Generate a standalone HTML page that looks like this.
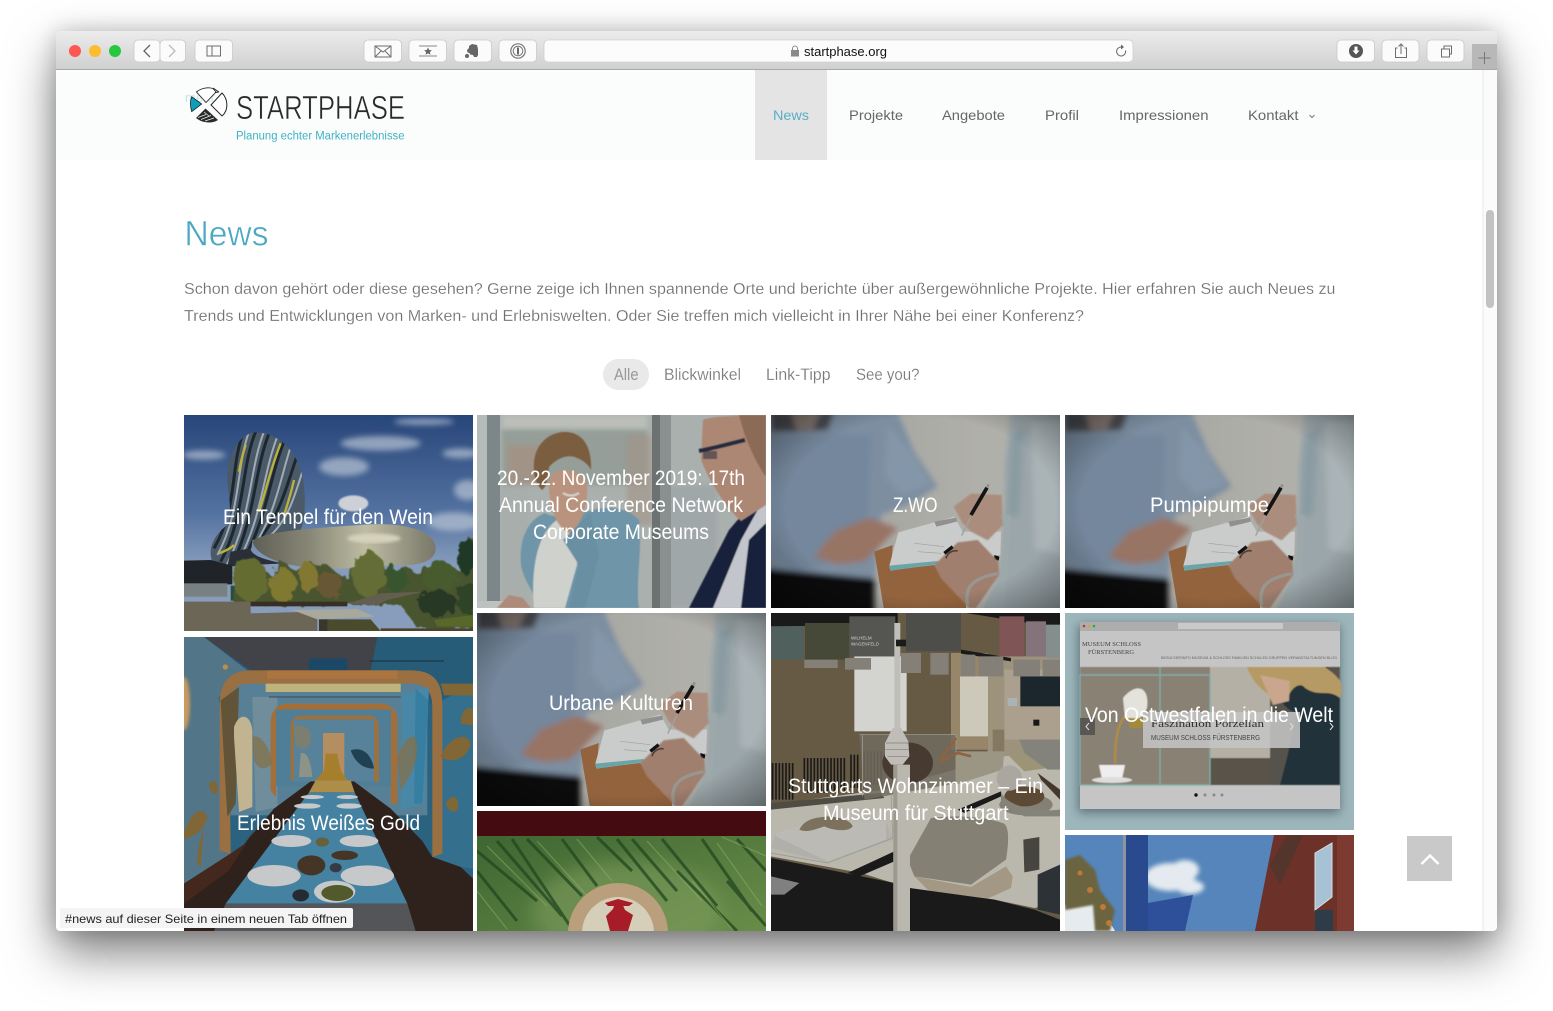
<!DOCTYPE html>
<html lang="de"><head><meta charset="utf-8"><title>Startphase News</title>
<style>
html,body{margin:0;padding:0;background:#fff;width:1553px;height:1011px;overflow:hidden}
#win{position:absolute;left:56px;top:31px;width:1441px;height:900px;border-radius:6px 6px 4px 4px;background:#fff;box-shadow:0 22px 48px rgba(0,0,0,.5),0 0 22px rgba(0,0,0,.18)}
svg#p{position:absolute;left:0;top:0}
text{font-family:"Liberation Sans",sans-serif}
.t{fill:#fff;font-size:21px}
.n{font-size:14px;fill:#666}
.b{font-size:16px;fill:#6f6f6f;stroke:#fff;stroke-width:.18}
.f{font-size:17px;fill:#777;stroke:#fff;stroke-width:.18}
.btn{fill:#fbfbfb;stroke:#c9c9c9;stroke-width:.8}
.i{fill:none;stroke:#6e6e6e;stroke-width:1}
</style></head><body>
<div id="win"></div>
<svg id="p" xmlns="http://www.w3.org/2000/svg" width="1553" height="1011" viewBox="0 0 1553 1011">
<defs>
<clipPath id="wc"><rect x="56" y="31" width="1441" height="900" rx="5"/></clipPath>
<clipPath id="tow"><path d="M130 200C125 110 175 50 220 52 290 55 360 120 362 240 365 300 355 345 345 350L205 375 200 420 130 455 85 440C70 400 90 360 130 330 145 290 135 250 130 200Z"/></clipPath>
<filter id="b05"><feGaussianBlur stdDeviation=".6"/></filter>
<filter id="b1"><feGaussianBlur stdDeviation="1"/></filter>
<filter id="b2"><feGaussianBlur stdDeviation="2.500"/></filter>
<filter id="b5"><feGaussianBlur stdDeviation="5"/></filter>
<filter id="b8"><feGaussianBlur stdDeviation="9"/></filter>
<filter id="rough" x="-5%" y="-5%" width="110%" height="110%"><feTurbulence type="fractalNoise" baseFrequency=".035" numOctaves="3" seed="4" result="n"/><feDisplacementMap in="SourceGraphic" in2="n" scale="32"/><feGaussianBlur stdDeviation="1.200"/></filter>
<linearGradient id="tb" x1="0" y1="0" x2="0" y2="1"><stop offset="0" stop-color="#ececed"/><stop offset="1" stop-color="#d0d0d1"/></linearGradient>
<linearGradient id="sky" x1="0" y1="0" x2="0" y2="1"><stop offset="0" stop-color="#2a4a80"/><stop offset=".45" stop-color="#5878a9"/><stop offset=".7" stop-color="#8fa6c6"/><stop offset="1" stop-color="#8fa6c6"/></linearGradient>
<linearGradient id="sil" x1="0" y1="0" x2="1" y2="0"><stop offset="0" stop-color="#65645a"/><stop offset=".3" stop-color="#8e8d7c"/><stop offset=".62" stop-color="#c9c7ac"/><stop offset="1" stop-color="#7f7e6f"/></linearGradient>
<linearGradient id="wbg" x1="0" y1="0" x2="1" y2="0"><stop offset="0" stop-color="#a9aaa6"/><stop offset="1" stop-color="#c2c1ba"/></linearGradient>
<radialGradient id="vig" cx=".52" cy=".48" r=".72"><stop offset=".65" stop-color="#000" stop-opacity="0"/><stop offset="1" stop-color="#000" stop-opacity=".4"/></radialGradient>
<linearGradient id="fern" x1="0" y1="0" x2="1" y2="1"><stop offset="0" stop-color="#3f6a34"/><stop offset="1" stop-color="#72994f"/></linearGradient>
<symbol id="wr" viewBox="0 0 867 579" width="289" height="193">
<rect width="867" height="579" fill="url(#wbg)"/>
<g filter="url(#b8)">
<path d="M-20-20H375L430 110 500 215 420 265 330 300 310 490 60 495-20 445Z" fill="#8497ab"/>
<path d="M0 60H300L290 300 200 440 70 470 0 410Z" fill="#7b90a6"/>
<path d="M350 30L420 110 480 210 390 240 340 180Z" fill="#8da0b4"/>
<path d="M0-10H190L170 45 60 50 0 50Z" fill="#4e5054"/>
<path d="M60-10H150L125 45 75 45Z" fill="#8b7d78"/>
<path d="M-20 460L310 490V600H-20Z" fill="#0c0c0f"/>
<path d="M130 425L190 350 295 308 380 340 335 385 280 440 200 448Z" fill="#a27c6c"/>
<path d="M720 -20H890V600H640L690 430 700 300 700 150Z" fill="#a5b1b5"/>
<path d="M780 20H870V420L790 400Z" fill="#b5bfc2"/>
<path d="M720 60L760 40 745 300 705 310Z" fill="#93a6ad"/>
</g>
<g filter="url(#b1)">
<path d="M310 410L365 390 360 465 490 450 585 560V590H340Z" fill="#9d6a43"/>
<path d="M355 452L382 352 550 305 575 350 690 350 688 420 500 447 358 467Z" fill="#d6d9d7"/>
<path d="M355 452L500 438 500 447 358 467Z" fill="#6fb0b3"/>
<path d="M490 320l65-12 3 12-62 15z" fill="#999"/>
<path d="M430 385l90 10M440 410l70 5" stroke="#aaa" stroke-width="2"/>
<path d="M670 420l15 5-2 12-13-3z" fill="#111"/>
</g>
<g filter="url(#b2)">
<path d="M548 275L600 236 692 240 696 330 650 376 600 350 575 325Z" fill="#b69685"/>
<path d="M490 450L560 382 620 375 682 440 684 480 615 579H595L510 490Z" fill="#aa8775"/>
<path d="M690 300C705 350 700 430 680 500L625 600H700L720 300Z" fill="#a7b3b6"/>
</g>
<path d="M572 362L600 305" stroke="#aaa" stroke-width="4"/>
<path d="M600 300L648 218" stroke="#141414" stroke-width="11" filter="url(#b05)"/>
<path d="M648 218l5-10" stroke="#999" stroke-width="8"/>
<path d="M520 415L545 395" stroke="#141414" stroke-width="10"/>
<path d="M525 430C530 410 550 405 560 408" stroke="#55443c" stroke-width="5" fill="none"/>
<path d="M590 570C580 520 600 490 680 476" stroke="#a2a198" stroke-width="10" fill="none"/>
<rect width="867" height="579" fill="url(#vig)"/>
<rect width="867" height="579" fill="#000" opacity=".06"/>
</symbol>
</defs>

<g clip-path="url(#wc)">
<rect x="56" y="31" width="1441" height="900" fill="#fff"/>
<!-- toolbar -->
<rect x="56" y="31" width="1441" height="38" fill="url(#tb)"/>
<rect x="56" y="69" width="1441" height="1" fill="#a9a9a9"/>
<circle cx="75" cy="51" r="6" fill="#fc5753"/><circle cx="95" cy="51" r="6" fill="#fdbc2e"/><circle cx="115" cy="51" r="6" fill="#27c83f"/>
<rect class="btn" x="134" y="40" width="26" height="22" rx="4"/><rect class="btn" x="160" y="40" width="25.500" height="22" rx="4"/>
<path d="M150 45l-6 6 6 6" fill="none" stroke="#666" stroke-width="1.300"/><path d="M169 45l6 6-6 6" fill="none" stroke="#bbb" stroke-width="1.300"/>
<rect class="btn" x="195" y="40" width="37.500" height="22" rx="4"/>
<rect class="i" x="207" y="46" width="13.500" height="10"/><path class="i" d="M212 46v10"/>
<rect class="btn" x="364" y="40" width="37.500" height="22" rx="4"/>
<path class="i" d="M375 46h16v11h-16zM375 46l8 6 8-6M375 57l6-6M391 57l-6-6"/>
<rect class="btn" x="409" y="40" width="37.500" height="22" rx="4"/>
<path d="M419 46h18M419 56h18" stroke="#888" stroke-width="1"/><path d="M428 47.500l1.200 2.500 2.700.3-2 1.800.6 2.700-2.500-1.400-2.500 1.400.6-2.700-2-1.800 2.700-.3z" fill="#666"/>
<rect class="btn" x="454" y="40" width="37.500" height="22" rx="4"/>
<path d="M467 50l2-2V46l3-2 5 1 1 4v6l-1 2h-3l-1-2-3-.5-.5-1.500-2-.5z" fill="#666"/><circle cx="467" cy="56" r="2" fill="#666"/>
<rect class="btn" x="499" y="40" width="37.500" height="22" rx="4"/>
<circle cx="518" cy="51" r="7.200" fill="none" stroke="#777" stroke-width="1.200"/><circle cx="518" cy="51" r="4.800" fill="none" stroke="#777" stroke-width="1"/><rect x="517" y="47.500" width="2" height="7" fill="#666"/>
<rect x="544" y="40" width="589" height="22" rx="4" fill="#fcfcfc" stroke="#cfcfcf" stroke-width=".8"/>
<path d="M792.500 50v-1.500a2.500 2.500 0 0 1 5 0V50" fill="none" stroke="#8a8a8a"/><rect x="791" y="50" width="8" height="6.500" fill="#8a8a8a"/>
<text x="804" y="56" font-size="12.500" fill="#111" textLength="83" lengthAdjust="spacingAndGlyphs">startphase.org</text>
<path d="M1125.500 50.500a4.500 4.500 0 1 1-4-3.500" fill="none" stroke="#666"/><path d="M1121 44.500l3 2.500-3 2.500z" fill="#666"/>
<rect class="btn" x="1337" y="40" width="37.500" height="22" rx="4"/>
<circle cx="1356" cy="51" r="7" fill="#555"/><path d="M1354.500 46.500h3v4h2l-3.500 4-3.500-4h2z" fill="#fff"/>
<rect class="btn" x="1382" y="40" width="37" height="22" rx="4"/>
<path class="i" d="M1397.500 48h-2v9.500h11V48h-2M1401 54V44M1398.500 46.500l2.500-2.500 2.500 2.500"/>
<rect class="btn" x="1427" y="40" width="37" height="22" rx="4"/>
<path class="i" d="M1441.500 49h8v8h-8zM1444 49v-3h7.500v8h-2"/>
<rect x="1472" y="44" width="25" height="25" fill="#b8b8b9"/>
<path d="M1478.500 58h12M1484.500 52v12" stroke="#777" stroke-width="1"/>

<!-- header -->
<rect x="56" y="70" width="1441" height="90" fill="#fbfdfc"/>
<rect x="755" y="70" width="72" height="90" fill="#e4e4e4"/>
<text x="185" y="102" font-size="13" fill="#c9e3ee" textLength="40" lengthAdjust="spacingAndGlyphs">mehr...</text>
<!-- logo mark -->
<path d="M191.700 96.700L201.700 104 191.700 111.700C190 106 190 101 191.700 96.700Z" fill="#0e9fb8" stroke="#111" stroke-width=".7"/>
<path d="M196.500 92C200 89 207 86.500 213 88.500L216 92 206 102.500Z" fill="#fff" stroke="#222" stroke-width=".9"/>
<path d="M211 105L222 93C228 99 229 110 222 116Z" fill="#fff" stroke="#222" stroke-width="1"/>
<path d="M196 118L205.500 108.500 218 120C212 124 202 123 196 118Z" fill="#2a2a2a"/>
<path d="M198 117.500l8-3M201 119.500l10-4M205 121l9-3M204 112l5 4" stroke="#eee" stroke-width=".7"/>
<path d="M213 88l6 4M219 92l-4 .5" fill="none" stroke="#222" stroke-width=".9"/>
<text x="236" y="119" font-size="33" fill="#2a2a2a" stroke="#fbfdfc" stroke-width=".55" textLength="169" lengthAdjust="spacingAndGlyphs" style="font-family:'Liberation Sans Narrow','Liberation Sans',sans-serif">STARTPHASE</text>
<text x="236" y="139.500" font-size="11.500" fill="#3fb2c6" textLength="168.500" lengthAdjust="spacingAndGlyphs">Planung echter Markenerlebnisse</text>
<text class="n" x="773" y="120" style="fill:#5aaec6" textLength="36" lengthAdjust="spacingAndGlyphs">News</text>
<text class="n" x="849" y="120" textLength="54" lengthAdjust="spacingAndGlyphs">Projekte</text>
<text class="n" x="942" y="120" textLength="63" lengthAdjust="spacingAndGlyphs">Angebote</text>
<text class="n" x="1045" y="120" textLength="34" lengthAdjust="spacingAndGlyphs">Profil</text>
<text class="n" x="1119" y="120" textLength="89.500" lengthAdjust="spacingAndGlyphs">Impressionen</text>
<text class="n" x="1248" y="120" textLength="50.500" lengthAdjust="spacingAndGlyphs">Kontakt</text>
<path d="M1309.500 115l2.500 2.500 2.500-2.500" fill="none" stroke="#777"/>

<!-- content -->
<text x="184.500" y="245.500" font-size="35" fill="#4ba8c2" stroke="#fff" stroke-width=".5" textLength="84" lengthAdjust="spacingAndGlyphs">News</text>
<text class="b" x="184" y="294" textLength="1151.500" lengthAdjust="spacingAndGlyphs">Schon davon gehört oder diese gesehen? Gerne zeige ich Ihnen spannende Orte und berichte über außergewöhnliche Projekte. Hier erfahren Sie auch Neues zu</text>
<text class="b" x="184" y="321" textLength="900" lengthAdjust="spacingAndGlyphs">Trends und Entwicklungen von Marken- und Erlebniswelten. Oder Sie treffen mich vielleicht in Ihrer Nähe bei einer Konferenz?</text>
<rect x="603" y="359" width="46" height="31" rx="15.500" fill="#e9e9e9"/>
<text class="f" x="614" y="380" style="fill:#999;stroke:none" textLength="24.500" lengthAdjust="spacingAndGlyphs">Alle</text>
<text class="f" x="664" y="380" textLength="77" lengthAdjust="spacingAndGlyphs">Blickwinkel</text>
<text class="f" x="766" y="380" textLength="64.500" lengthAdjust="spacingAndGlyphs">Link-Tipp</text>
<text class="f" x="856" y="380" textLength="63.500" lengthAdjust="spacingAndGlyphs">See you?</text>

<!-- Wine tile -->
<svg x="184" y="415" width="289" height="216" viewBox="0 0 867 648">
<rect width="867" height="648" fill="url(#sky)"/>
<g filter="url(#b8)" fill="#c2cfe0" opacity=".7">
<ellipse cx="590" cy="85" rx="120" ry="22"/><ellipse cx="480" cy="155" rx="75" ry="28"/><ellipse cx="830" cy="115" rx="55" ry="15"/><ellipse cx="810" cy="320" rx="80" ry="28"/><ellipse cx="60" cy="120" rx="65" ry="14"/><ellipse cx="720" cy="20" rx="90" ry="10"/><ellipse cx="850" cy="225" rx="40" ry="30"/>
</g>
<ellipse cx="508" cy="265" rx="45" ry="24" fill="#d9dde3" filter="url(#b2)"/>
<path d="M130 200C125 110 175 50 220 52 290 55 360 120 362 240 365 300 355 345 345 350L205 375 200 420 130 455 85 440C70 400 90 360 130 330 145 290 135 250 130 200Z" fill="#4f5f6e"/>
<g clip-path="url(#tow)" fill="none">
<g stroke="#1f2a33" stroke-width="9"><path d="M175 60C140 160 160 280 90 400M215 50C170 160 185 300 110 440M255 55C210 170 215 300 145 450M300 80C255 190 250 310 175 440M340 120C305 220 285 320 200 400"/></g>
<g stroke="#aab5bd" stroke-width="6"><path d="M195 50C155 160 172 290 100 420M240 50C195 165 205 300 128 450M280 65C235 180 235 310 160 445M320 95C285 205 270 320 190 420M355 170C330 250 310 320 250 370"/></g>
<g stroke="#c7bb3e" stroke-width="7"><path d="M290 85C260 160 245 230 225 290M330 195C320 240 310 270 300 300M185 90C175 120 170 140 165 170M150 390C140 400 120 410 105 415"/></g>
</g>
<path d="M205 380C240 345 400 340 550 328 670 322 755 350 755 400 755 440 700 455 620 450 500 465 380 465 300 445 250 430 215 410 205 380Z" fill="url(#sil)"/>
<ellipse cx="570" cy="370" rx="80" ry="14" fill="#e2dfc6" filter="url(#b5)"/>
<path d="M200 400C200 420 240 435 300 445L200 450 130 455 140 410Z" fill="#2c3238"/>
<path d="M0 437L80 435 145 452V508H0Z" fill="#22262c"/>
<rect x="0" y="505" width="130" height="40" fill="#7f8789"/>
<rect x="140" y="512" width="25" height="45" fill="#2c5246"/>
<g filter="url(#rough)">
<path d="M150 560L190 430 260 480 290 440 340 470 380 445 430 450 480 490 560 410 610 470 650 455 700 470 760 440 830 470 820 420 850 365 880 380V640H700L650 570H150Z" fill="#4e5a32"/>
<ellipse cx="200" cy="495" rx="50" ry="65" fill="#6a7234"/>
<ellipse cx="295" cy="510" rx="42" ry="50" fill="#868036"/>
<ellipse cx="375" cy="490" rx="28" ry="45" fill="#8b7f34"/>
<ellipse cx="440" cy="510" rx="40" ry="40" fill="#6d5c38"/>
<ellipse cx="555" cy="480" rx="50" ry="70" fill="#6b7339"/>
<ellipse cx="640" cy="495" rx="35" ry="40" fill="#3e5a33"/>
<ellipse cx="770" cy="485" rx="55" ry="42" fill="#4b6030"/>
<ellipse cx="850" cy="425" rx="30" ry="55" fill="#233c2a"/>
<ellipse cx="760" cy="565" rx="60" ry="38" fill="#2b3a28"/>
<ellipse cx="850" cy="550" rx="30" ry="50" fill="#31462b"/>
</g>
<path d="M0 560H200V595L400 590V648H0Z" fill="#716c5a"/>
<rect x="200" y="560" width="290" height="14" fill="#3b3226"/>
<path d="M490 565L590 535 720 530 610 555 580 570Z" fill="#6a6456"/>
<path d="M325 585L520 582 572 605 400 613Z" fill="#b3b1a5"/>
<rect x="405" y="613" width="30" height="35" fill="#3a3a30"/>
<path d="M430 613H560L590 648H430Z" fill="#4e5030"/>
<path d="M590 640H867V648H590Z" fill="#54482e"/><path d="M750 615L867 600V635L760 635Z" fill="#5d6d2d"/>
<rect width="867" height="648" fill="#000" opacity=".05"/>
</svg>

<!-- Gold tile -->
<svg x="184" y="637" width="289" height="294" viewBox="0 0 867 882">
<rect width="867" height="882" fill="#2e6b8a"/>
<path d="M0 0H867V200H0Z" fill="#2a6483"/>
<path d="M60 0H580L560 100H200Z" fill="#47494f"/>
<path d="M375 65H490V100H375Z" fill="#1f4f70"/>
<path d="M555 72H780" stroke="#1d2f3c" stroke-width="3"/>
<path d="M0 0H60L190 100 105 180 140 650 0 740Z" fill="#5a7f94"/>
<ellipse cx="0" cy="200" rx="18" ry="80" fill="#d9a868" filter="url(#b5)"/>
<circle cx="124" cy="90" r="8" fill="#cf9a55"/>
<path d="M745 660L775 190 867 140V695L830 690Z" fill="#39799a"/>
<g filter="url(#b05)">
<rect x="140" y="135" width="590" height="400" fill="#5f8ba3"/>
<path d="M107 640V200C107 130 145 100 200 100H680C745 100 775 130 775 200V650L745 660V210C745 160 720 140 690 140H190C150 140 138 170 135 210L140 650Z" fill="#a87a48"/>
<path d="M250 100H640V125H250Z" fill="#bb7f45"/>
<path d="M110 190L165 150 155 500 130 540Z" fill="#6a5b3e"/>
<path d="M150 270C165 225 200 230 205 280V510L165 525 150 300Z" fill="#d3c49d"/>
<path d="M205 180H280V510L215 525Z" fill="#7a99a9"/>
<path d="M655 170L735 150 720 500 650 520Z" fill="#4f93b5"/>
<path d="M695 155L733 190 715 500 690 500Z" fill="#3b8ab0"/>
<rect x="245" y="140" width="405" height="25" fill="#d0c388"/>
<path d="M255 180H650" stroke="#3c505c" stroke-width="3"/>
<path d="M260 460V260C260 220 280 200 310 200H590C620 200 640 220 640 250V500L620 500V262C620 235 600 218 580 218H320C295 218 280 235 276 262V480Z" fill="#b0793f"/>
<rect x="276" y="218" width="345" height="230" fill="#5989a4"/>
<path d="M320 430V270C320 245 335 235 355 235H550C570 235 585 245 585 270V435L570 435V280C570 260 555 248 535 248H360C345 248 330 262 330 280V430Z" fill="#a67c4a"/>
<rect x="330" y="248" width="240" height="185" fill="#5f8ea8"/>
<rect x="417" y="288" width="64" height="135" fill="#c49b6b"/>
<path d="M330 270C350 262 385 265 380 310 375 340 350 345 335 320Z" fill="#8f8a6e" opacity=".8"/>
<path d="M500 340C525 330 560 340 570 395 540 395 515 380 500 340Z" fill="#23475a"/>
<path d="M350 350C365 340 380 365 385 420L345 420Z" fill="#b3a98a" opacity=".7"/>
<path d="M205 300C225 290 255 320 265 380 240 400 225 400 210 370Z" fill="#90794c" opacity=".7"/>
<path d="M640 360C665 290 700 280 700 330 700 390 670 430 650 460Z" fill="#94774a" opacity=".7"/>
</g>
<path d="M0 740L140 650 180 622 270 515 380 433H510L620 515 715 612 745 660 830 690 867 725V882H0Z" fill="#33241e"/>
<path d="M0 740L140 650 180 622 215 575 135 700 0 800Z" fill="#4a2c20"/>
<path d="M395 430H500L512 466H375Z" fill="#bd9a50"/>
<path d="M375 466H512L670 800H125Z" fill="#4b8eb0"/>
<path d="M425 350L460 350 470 400 490 430H395L420 400Z" fill="#b58a30"/>
<g fill="#d7dadb">
<ellipse cx="322" cy="612" rx="60" ry="18"/><ellipse cx="525" cy="612" rx="58" ry="18"/><ellipse cx="270" cy="716" rx="80" ry="32"/><ellipse cx="550" cy="716" rx="80" ry="31"/><ellipse cx="452" cy="764" rx="62" ry="33"/><ellipse cx="370" cy="507" rx="40" ry="8"/><ellipse cx="495" cy="507" rx="38" ry="8"/><ellipse cx="385" cy="480" rx="35" ry="6"/><ellipse cx="490" cy="480" rx="32" ry="6"/>
</g>
<g fill="#4a3a2a"><ellipse cx="382" cy="685" rx="42" ry="30"/><ellipse cx="482" cy="655" rx="40" ry="14"/><ellipse cx="350" cy="775" rx="25" ry="18" fill="#2a2f38"/><ellipse cx="460" cy="768" rx="48" ry="24" fill="#5a6230"/><ellipse cx="455" cy="692" rx="18" ry="14" fill="#39404a"/><ellipse cx="415" cy="615" rx="20" ry="14" fill="#6f6a40"/></g>
<path d="M125 800H670L695 882H90Z" fill="#5c5d60"/>
<g fill="#8d6f3b"><path d="M0 590C20 530 50 500 70 540 65 570 35 600 0 605ZM75 440C95 415 105 450 100 470 85 475 75 460 75 440ZM40 680C40 620 60 580 60 560L50 690Z"/><path d="M770 360C790 300 850 280 860 320 850 370 800 380 770 360ZM830 260C830 220 855 200 867 220V265ZM785 500C800 470 830 470 820 520 810 530 790 520 785 500ZM770 140H867V175H780Z"/></g>
<rect width="867" height="882" fill="#000" opacity=".08"/>
</svg>

<!-- Conference tile -->
<svg x="477" y="415" width="289" height="193" viewBox="0 0 289 193">
<rect width="289" height="193" fill="#c2c9c5"/>
<g filter="url(#b2)">
<rect x="25" width="145" height="70" fill="#aab4ae"/>
<rect x="25" y="0" width="145" height="14" fill="#d5d9d3"/>
<rect x="150" y="20" width="25" height="90" fill="#b9a69a" opacity=".6"/>
<rect x="30" y="30" width="40" height="40" fill="#b8a99a"/>
<rect x="190" y="70" width="50" height="123" fill="#b7bfc1"/>
<rect x="25" y="70" width="25" height="123" fill="#bfc6c4"/>
</g>
<rect x="10" width="13" height="186" fill="#8f9a9c"/><rect x="0" width="10" height="186" fill="#cfd5d2"/><rect x="0" y="186" width="40" height="7" fill="#d8dcda"/>
<rect x="175" width="8" height="193" fill="#7a8281"/><rect x="183" width="11" height="193" fill="#9ca4a3"/>
<g filter="url(#b05)">
<path d="M20 193L32 180 46 183 54 193Z" fill="#c79e8c"/>
<path d="M44 150C42 125 50 105 68 98 80 105 100 100 112 96 130 90 150 92 162 105 166 130 158 170 162 193H60C58 175 48 170 44 150Z" fill="#7eaac0"/>
<path d="M57 193C54 160 58 120 80 105L100 125 100 150 88 193Z" fill="#eceee9"/>
<path d="M86 125L102 150 92 193H108L122 140 113 98Z" fill="#77a3b9"/>
<path d="M72 70C70 50 105 50 110 70 112 95 100 115 92 118 80 112 72 95 72 70Z" fill="#d3a88f"/>
<path d="M57 55C55 30 72 17 88 17 106 17 115 32 114 55 112 50 106 45 100 43 90 38 78 45 72 52 70 62 70 72 65 75 60 70 57 62 57 55Z" fill="#8c6a48"/>
<path d="M86 78q8 5 16 0" stroke="#f3f3f3" stroke-width="2" fill="none"/>
<path d="M212 193L252 115 289 72V193Z" fill="#1c2745"/>
<path d="M236 193L264 125 289 80V193Z" fill="#dde1e7"/>
<path d="M264 193L272 125 289 108V193Z" fill="#1c2745"/>
<path d="M226 5C235 0 289 0 289 0V90L264 106C244 88 230 60 224 45Z" fill="#c49a85"/>
<path d="M262 0H289V62C280 50 268 25 262 0Z" fill="#a07a62"/>
<path d="M222 36L240 32 268 25" stroke="#2a3347" stroke-width="4" fill="none"/>
<path d="M226 40h14" stroke="#2a3347" stroke-width="8" stroke-opacity=".55"/>
</g>
<rect width="289" height="193" fill="#000" opacity=".12"/>
</svg>

<!-- Writing tiles -->
<use href="#wr" x="771" y="415" width="289" height="193"/>
<use href="#wr" x="1065" y="415" width="289" height="193"/>
<use href="#wr" x="477" y="613" width="289" height="193"/>

<!-- Green tile -->
<svg x="477" y="811" width="289" height="120" viewBox="0 0 289 120">
<rect width="289" height="120" fill="url(#fern)"/>
<ellipse cx="150" cy="100" rx="95" ry="50" fill="#8fb06a" opacity=".5" filter="url(#b8)"/>
<g stroke="#234c22" stroke-width="3" fill="none" opacity=".75">
<path d="M0 40L60 90M0 60L40 110M20 30L85 105M50 28L105 85M85 28L120 75M120 26L155 60M155 28L200 80M185 28L240 95M225 28L275 100M260 28L289 60M200 60L260 120M250 70L289 115M35 28L95 118M140 28L190 90"/>
</g>
<g stroke="#a0c078" stroke-width="1.200" fill="none" opacity=".5"><path d="M10 35L70 95M60 30L115 90M100 28L135 70M170 30L225 90M240 32L285 95M245 26L289 45M0 80L30 118M215 70L255 118"/></g>
<rect width="289" height="25" fill="#4a0d12"/>
<circle cx="141" cy="122" r="50" fill="#c9ad86"/>
<circle cx="141" cy="122" r="36" fill="#e8e0c9"/>
<path d="M133 120L129 105 136 98 138 92 145 92 148 99 156 104 151 120Z" fill="#b61f2b"/>
<path d="M128 92l13-4 15 4-4 3h-21z" fill="#b61f2b"/>
<rect width="289" height="120" fill="#000" opacity=".08"/>
</svg>

<!-- Museum tile -->
<svg x="771" y="613" width="289" height="318" viewBox="0 0 867 954">
<rect width="867" height="954" fill="#6f614b"/>
<rect x="650" y="130" width="217" height="300" fill="#a99f87"/>
<rect x="700" y="170" width="167" height="210" fill="#b7ad98"/>
<rect x="540" y="120" width="110" height="290" fill="#a39171"/>
<rect x="250" y="130" width="157" height="225" fill="#e3e4df"/>
<rect x="567" y="190" width="84" height="180" fill="#dcd9c9"/>
<rect x="748" y="190" width="119" height="90" fill="#1e2a30"/>
<rect x="665" y="350" width="35" height="65" fill="#8f8269"/>
<rect x="787" y="320" width="18" height="18" fill="#1a1a1a"/>
<rect x="710" y="255" width="28" height="24" fill="#b9c1c4"/>
<path d="M0 0H380V35L0 40ZM570 110L720 135V145L570 122ZM585 0H867V45Z" fill="#1d1d1d"/>
<g filter="url(#b05)">
<rect x="0" y="40" width="98" height="100" fill="#566865"/>
<rect x="102" y="30" width="133" height="110" fill="#4e4f3c"/>
<rect x="235" y="10" width="138" height="120" fill="#5c5c59"/>
<rect x="405" y="0" width="165" height="115" fill="#53524f"/>
<rect x="685" y="10" width="75" height="120" fill="#8a5b5c"/>
<rect x="765" y="25" width="60" height="105" fill="#8e7c84"/>
<rect x="825" y="35" width="42" height="100" fill="#8e9a98"/>
<rect x="100" y="140" width="100" height="25" fill="#8e8a80"/><rect x="222" y="135" width="78" height="35" fill="#8e8a80"/><rect x="390" y="120" width="60" height="60" fill="#8e8a80"/><rect x="478" y="120" width="55" height="65" fill="#8e8a80"/><rect x="570" y="125" width="43" height="65" fill="#8e8a80"/><rect x="623" y="130" width="74" height="60" fill="#8e8a80"/><rect x="727" y="140" width="80" height="50" fill="#8e8a80"/><rect x="815" y="140" width="52" height="50" fill="#8e8a80"/>
</g>
<text x="240" y="80" font-size="13" fill="#e2e2dc" textLength="62" lengthAdjust="spacingAndGlyphs">WILHELM</text><text x="240" y="98" font-size="13" fill="#e2e2dc" textLength="84" lengthAdjust="spacingAndGlyphs">WAGENFELD</text>
<g stroke="#1e1d1a" stroke-width="5"><path d="M5 450v110M15 450v110M25 450v110M35 450v110M45 450v110M55 450v110M65 450v110M100 435v105M110 435v105M120 435v105M130 435v105M140 435v105M150 435v105M160 435v105M170 435v105M180 435v105M190 435v105M200 435v105M210 435v100M220 435v100M240 425v100M250 425v100M260 425v100M280 415v100M290 415v100M300 415v100M310 415v100M320 415v100M330 415v100"/></g>
<path d="M0 575L340 530 690 430 867 420V870L790 885 670 860 415 825 270 780 0 730Z" fill="#c9c5bb"/>
<path d="M0 570L330 540 340 555 0 590Z" fill="#56524a"/>
<path d="M265 365H555L560 510 280 560Z" fill="#7a7467" opacity=".85"/>
<path d="M265 365H555M275 365V550M555 365V500" stroke="#b0b5a8" stroke-width="2" fill="none"/>
<path d="M555 415L700 415 695 470 555 515Z" fill="#a7a18f"/>
<ellipse cx="410" cy="450" rx="76" ry="62" fill="#4d4035"/>
<path d="M555 375L515 430 510 445 560 420 600 430" stroke="#9a6a45" stroke-width="8" fill="none"/>
<path d="M710 425L785 420 830 465 760 475Z" fill="#a8a07e"/>
<path d="M745 380H867V470H830L760 420Z" fill="#8f8d85"/>
<ellipse cx="765" cy="575" rx="80" ry="32" fill="#8e8a7f"/>
<ellipse cx="760" cy="550" rx="60" ry="30" fill="#64503a"/>
<circle cx="715" cy="495" r="38" fill="#b7b4ad"/>
<path d="M800 480L867 530V560L810 500Z" fill="#4a3c30"/>
<path d="M0 705L15 660 130 630 345 625 365 680 170 748Z" fill="#bfbdb6"/>
<path d="M15 670L170 745 345 680 345 625 130 625 15 660Z" fill="#cbc9c2"/>
<path d="M85 650C105 610 150 615 165 610 195 610 240 620 245 640 230 660 180 650 160 640 130 650 105 660 85 650Z" fill="#857a65"/>
<path d="M0 720L170 750 365 675 360 530" stroke="#9aa69c" stroke-width="2" fill="none"/>
<path d="M230 780L370 715V745L265 790Z" fill="#1d1d1d"/>
<path d="M560 590L690 535V550L580 600Z" fill="#1d1d1d"/>
<path d="M410 740L480 615Q610 600 700 632 720 650 705 740L600 815 430 790Z" fill="#8f8b7d"/>
<path d="M430 790L600 822 705 760 725 790 720 825 610 875 470 830Z" fill="#afa48f"/>
<path d="M757 680L805 672V770L760 778Z" fill="#4c4b44"/>
<path d="M800 785L867 755V905L800 890Z" fill="#30363b"/>
<path d="M690 530C690 570 780 600 867 590V610H760L690 570Z" fill="#8f8d84"/>
<path d="M0 735L370 810V954H0Z" fill="#1d1d1e"/>
<path d="M415 825L670 860 790 890 867 920V954H415Z" fill="#1d1d1e"/>
<path d="M0 790L85 810 40 845 0 845Z" fill="#8a8a8a"/>
<rect x="370" y="30" width="18" height="320" fill="#cfcdc6"/>
<rect x="375" y="80" width="30" height="20" fill="#1d1d1d"/>
<path d="M365 345H390L412 385 415 430 395 455H360L342 430 342 390Z" fill="#cfccc6"/>
<g stroke="#8a8880" stroke-width="2"><path d="M345 390H412M343 410H414M350 430H410"/></g>
<rect x="367" y="455" width="50" height="499" fill="#c9c5bd"/>
<rect x="367" y="455" width="12" height="499" fill="#a9a59d"/>
<rect width="867" height="954" fill="#000" opacity=".07"/>
</svg>

<!-- Fürstenberg tile -->
<svg x="1065" y="613" width="289" height="217" viewBox="0 0 289 217">
<rect width="289" height="217" fill="#9cb6bc"/>
<rect x="13" y="12" width="262" height="188" fill="#5f747a" filter="url(#b5)"/>
<rect x="15" y="9" width="260" height="187" fill="#c5c5c5"/>
<rect x="15" y="9" width="260" height="9" fill="#adadad"/>
<circle cx="19" cy="13" r="1.300" fill="#c33"/><circle cx="24" cy="13" r="1.300" fill="#ca3"/><circle cx="29" cy="13" r="1.300" fill="#3a3"/>
<rect x="113" y="10" width="105" height="6" fill="#c9c9c9"/>
<text x="17" y="33" font-size="6" style="font-family:'Liberation Serif',serif" fill="#444" textLength="59" lengthAdjust="spacingAndGlyphs">MUSEUM SCHLOSS</text>
<text x="23" y="41" font-size="6" style="font-family:'Liberation Serif',serif" fill="#444" textLength="46" lengthAdjust="spacingAndGlyphs">FÜRSTENBERG</text>
<text x="96" y="46" font-size="4" fill="#666" textLength="176" lengthAdjust="spacingAndGlyphs">BESUCHERINFO  MUSEUM &amp; SCHLOSS  FAMILIEN  SCHULEN  GRUPPEN  VERANSTALTUNGEN  BLOG</text>
<g filter="url(#b05)">
<rect x="15" y="54" width="260" height="118" fill="#6f6a60"/>
<rect x="15" y="54" width="130" height="118" fill="#8a8175"/>
<rect x="145" y="54" width="60" height="118" fill="#b5b0a6"/>
<rect x="145" y="145" width="60" height="27" fill="#5a5248"/>
<rect x="205" y="54" width="70" height="118" fill="#55524c"/>
<path d="M15 62H145V172H15Z" fill="none" stroke="#7ab3ad" stroke-width="1.200"/><path d="M95 54V172" stroke="#7ab3ad" stroke-width="1.200"/>
<path d="M215 172L222 145 232 100C215 95 210 80 215 54H262L275 72V172Z" fill="#20303a"/>
<path d="M182 54H260C275 65 280 70 275 85 262 75 255 85 240 75 235 68 225 75 222 88 205 85 190 75 182 54Z" fill="#b69a65"/>
<path d="M195 62L208 92 224 88 225 68Z" fill="#c9a68d"/>
<path d="M65 100Q50 105 50 150" stroke="#b59031" stroke-width="2" fill="none"/>
<path d="M58 85C70 70 85 72 82 95 78 105 70 110 60 105Z" fill="#e3e3dc"/>
<path d="M63 105h18l-4 10h-12z" fill="#a58a35"/>
<path d="M34 152H60L57 166H37Z" fill="#eee"/><ellipse cx="47" cy="167" rx="20" ry="3" fill="#ddd"/>
</g>
<rect x="78" y="99" width="157" height="36" fill="#c4c4c4" opacity=".88"/>
<text x="86" y="114" font-size="11" style="font-family:'Liberation Serif',serif" fill="#2c2c2c" textLength="113" lengthAdjust="spacingAndGlyphs">Faszination Porzellan</text>
<text x="86" y="127" font-size="7" fill="#444" textLength="109" lengthAdjust="spacingAndGlyphs">MUSEUM SCHLOSS FÜRSTENBERG</text>
<rect x="15" y="105" width="15" height="17" fill="#444" opacity=".7"/>
<path d="M24 110l-3 3.500 3 3.500M225 110l3 3.500-3 3.500M265 110l3 3.500-3 3.500" fill="none" stroke="#ddd"/>
<circle cx="131" cy="182" r="1.700" fill="#111"/><circle cx="140" cy="182" r="1.500" fill="#888"/><circle cx="149" cy="182" r="1.500" fill="#888"/><circle cx="157" cy="182" r="1.500" fill="#888"/>
</svg>

<!-- Flag tile -->
<svg x="1065" y="835" width="289" height="96" viewBox="0 0 289 96">
<rect width="289" height="96" fill="#5585ba"/>
<g filter="url(#b2)" fill="#e4eaf0"><ellipse cx="105" cy="42" rx="25" ry="14"/><ellipse cx="120" cy="35" rx="14" ry="10"/><ellipse cx="125" cy="52" rx="14" ry="7"/></g>
<path d="M60 0H83V96H60Z" fill="#2a4a8f"/>
<path d="M83 68L128 60 120 96H83Z" fill="#2e4f9a"/>
<rect x="58" y="0" width="3" height="96" fill="#8f949c"/>
<path d="M0 96V70L30 62 50 96Z" fill="#e6ebef"/>
<g filter="url(#b1)"><path d="M0 25L15 20 30 35 35 55 50 75 45 96H30L28 70 0 75Z" fill="#6b6540"/></g>
<g fill="#bf7a35"><circle cx="25" cy="55" r="3"/><circle cx="38" cy="72" r="3"/><circle cx="15" cy="38" r="2.500"/><circle cx="44" cy="88" r="3"/></g>
<path d="M190 96L209 0H289V96Z" fill="#6c3129"/>
<path d="M205 30L222 0H238L215 50Z" fill="#54352c"/>
<path d="M250 18L267 8V62L250 75Z" fill="#a7c2d4" stroke="#ddd"/>
<rect x="250" y="75" width="18" height="21" fill="#2e3b49"/>
<rect x="272" y="0" width="17" height="96" fill="#7d3a30"/>
</svg>

<!-- tile captions -->
<text class="t" x="223" y="524" textLength="210" lengthAdjust="spacingAndGlyphs">Ein Tempel für den Wein</text>
<text class="t" x="497" y="485" textLength="248" lengthAdjust="spacingAndGlyphs">20.-22. November 2019: 17th</text>
<text class="t" x="499" y="512" textLength="244" lengthAdjust="spacingAndGlyphs">Annual Conference Network</text>
<text class="t" x="533" y="539" textLength="176" lengthAdjust="spacingAndGlyphs">Corporate Museums</text>
<text class="t" x="893" y="512" textLength="44.500" lengthAdjust="spacingAndGlyphs">Z.WO</text>
<text class="t" x="1150" y="512" textLength="119" lengthAdjust="spacingAndGlyphs">Pumpipumpe</text>
<text class="t" x="549" y="710" textLength="144" lengthAdjust="spacingAndGlyphs">Urbane Kulturen</text>
<text class="t" x="237" y="830" textLength="183" lengthAdjust="spacingAndGlyphs">Erlebnis Weißes Gold</text>
<text class="t" x="1085" y="722" textLength="248" lengthAdjust="spacingAndGlyphs">Von Ostwestfalen in die Welt</text>
<text class="t" x="788" y="793" textLength="255" lengthAdjust="spacingAndGlyphs">Stuttgarts Wohnzimmer – Ein</text>
<text class="t" x="823" y="820" textLength="185.500" lengthAdjust="spacingAndGlyphs">Museum für Stuttgart</text>

<!-- scrollbar -->
<rect x="1483" y="70" width="14" height="861" fill="#fbfbfb"/>
<rect x="1482.500" y="70" width="1" height="861" fill="#e8e8e8"/>
<rect x="1486" y="210" width="8" height="98" rx="4" fill="#c2c2c2"/>

<!-- back to top -->
<rect x="1407" y="836" width="45" height="45" fill="#c9c9c9"/>
<path d="M1421.500 864l8.500-8.500 8.500 8.500" fill="none" stroke="#fff" stroke-width="2.500"/>

<!-- status -->
<rect x="60" y="908" width="293" height="20" rx="2" fill="#f4f4f4"/>
<text x="65" y="923" font-size="12" fill="#222" textLength="282" lengthAdjust="spacingAndGlyphs">#news auf dieser Seite in einem neuen Tab öffnen</text>
</g>
</svg>
</body></html>
